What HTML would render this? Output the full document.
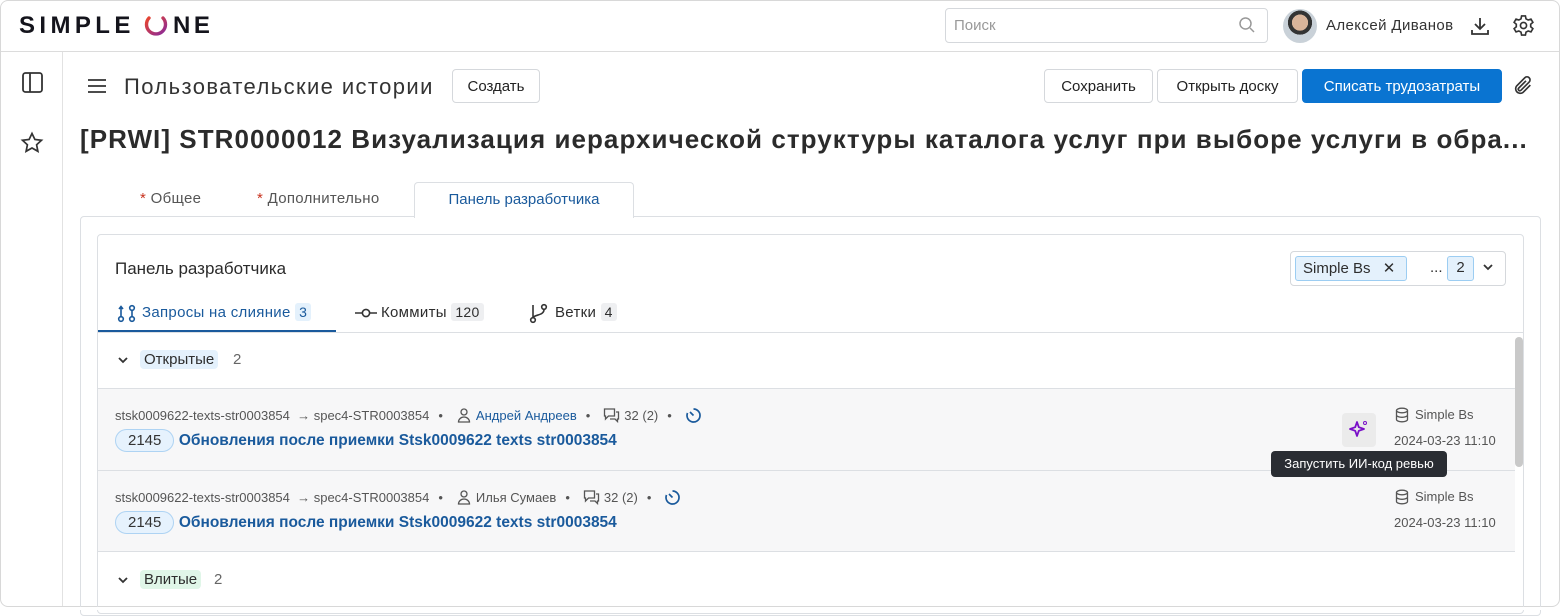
<!DOCTYPE html>
<html><head><meta charset="utf-8"><style>
*{box-sizing:border-box;margin:0;padding:0}
body{width:1560px;height:610px;overflow:hidden;background:#fff;font-family:"Liberation Sans","DejaVu Sans",sans-serif;color:#2e2e2e;position:relative}
.a{position:absolute;white-space:nowrap}
.btn{position:absolute;height:34px;border:1px solid #d5d8dc;border-radius:4px;background:#fff;font-size:15px;display:flex;align-items:center;justify-content:center;color:#222}
.meta{font-size:13px;color:#555;display:flex;align-items:center;gap:0}
.meta svg{margin:0 4px}
.dot{margin:0 9px}
.link{color:#1a5a9c}
.pill{display:inline-block;border:1px solid #aed3f3;background:#e6f2fd;border-radius:13px;padding:2px 12px;font-size:15px;color:#333}
.cnt{background:#eeeff1;border-radius:3px;padding:1px 4px;font-size:14px}
</style></head><body>
<div class="a" style="left:0;top:0;width:1560px;height:607px;border:1px solid #d8d8d8;border-radius:8px;overflow:hidden"></div>
<div class="a" style="left:1px;top:51px;width:1558px;height:1px;background:#dcdcdc"></div>
<div class="a" style="left:62px;top:52px;width:1px;height:554px;background:#e2e2e2"></div>
<!-- logo -->
<div class="a" style="left:19px;top:12px;font-size:24px;font-weight:bold;letter-spacing:4.4px;color:#14141c">SIMPLE</div>
<svg class="a" style="left:144px;top:13px" width="24" height="24" viewBox="0 0 24 24" fill="none"><defs><linearGradient id="g" x1="0" y1="0" x2="1" y2="1"><stop offset="0" stop-color="#e8452e"/><stop offset="1" stop-color="#8a2a9a"/></linearGradient></defs><path d="M5 5A9.5 9.5 0 1 0 19 5" stroke="url(#g)" stroke-width="3.4" stroke-linecap="round"/></svg>
<div class="a" style="left:173px;top:12px;font-size:24px;font-weight:bold;letter-spacing:3.5px;color:#14141c">NE</div>
<!-- search -->
<div class="a" style="left:945px;top:8px;width:323px;height:35px;border:1px solid #d5d8dc;border-radius:4px;font-size:15px;color:#999;padding:8px 8px">Поиск</div>
<svg class="a" style="left:1238px;top:16px" width="18" height="18" viewBox="0 0 18 18" fill="none" stroke="#999" stroke-width="1.5"><circle cx="7.5" cy="7.5" r="5.5"/><path d="M12 12l4 4"/></svg>
<div class="a" style="left:1283px;top:9px;width:34px;height:34px;border-radius:50%;background:radial-gradient(circle at 50% 40%,#d9b49a 0 30%,#333 31% 45%,#c9d1d8 46%)"></div>
<div class="a" style="left:1326px;top:17px;font-size:15px;color:#333;letter-spacing:.4px">Алексей Диванов</div>
<svg class="a" style="left:1469px;top:15px" width="22" height="22" viewBox="0 0 22 22" fill="none" stroke="#333" stroke-width="1.8"><path d="M11 3v11M6 9l5 5 5-5M3 15v4h16v-4"/></svg>
<svg class="a" style="left:1512px;top:14px" width="23" height="23" viewBox="0 0 24 24" fill="none" stroke="#333" stroke-width="1.7"><circle cx="12" cy="12" r="3.2"/><path d="M10 2h4l.6 3 2.3 1.3 2.9-1 2 3.4-2.3 2v2.6l2.3 2-2 3.4-2.9-1-2.3 1.3-.6 3h-4l-.6-3-2.3-1.3-2.9 1-2-3.4 2.3-2v-2.6l-2.3-2 2-3.4 2.9 1L9.4 5z"/></svg>
<!-- sidebar icons -->
<svg class="a" style="left:21px;top:71px" width="23" height="23" viewBox="0 0 23 23" fill="none" stroke="#333" stroke-width="1.8"><rect x="2" y="2" width="19" height="19" rx="2.5"/><path d="M9 2v19"/></svg>
<svg class="a" style="left:20px;top:131px" width="24" height="24" viewBox="0 0 24 24" fill="none" stroke="#333" stroke-width="1.7"><path d="M12 2.5l2.9 6 6.6.8-4.9 4.5 1.3 6.5L12 17l-5.9 3.3 1.3-6.5-4.9-4.5 6.6-.8z"/></svg>
<!-- toolbar -->
<svg class="a" style="left:87px;top:78px" width="20" height="16" viewBox="0 0 20 16" stroke="#333" stroke-width="1.8"><path d="M1 2h18M1 8h18M1 14h18"/></svg>
<div class="a" style="left:124px;top:74px;font-size:22px;color:#333;letter-spacing:1.4px">Пользовательские истории</div>
<div class="btn" style="left:452px;top:69px;width:88px">Создать</div>
<div class="btn" style="left:1044px;top:69px;width:109px">Сохранить</div>
<div class="btn" style="left:1157px;top:69px;width:141px">Открыть доску</div>
<div class="btn" style="left:1302px;top:69px;width:200px;background:#0a74d1;border-color:#0a74d1;color:#fff">Списать трудозатраты</div>
<svg class="a" style="left:1512px;top:75px" width="22" height="22" viewBox="0 0 24 24" fill="none" stroke="#333" stroke-width="1.8"><path d="M20 11l-8 8a5 5 0 01-7-7l9-9a3.3 3.3 0 014.7 4.7l-9 9a1.7 1.7 0 01-2.4-2.4l8-8"/></svg>
<div class="a" style="left:80px;top:124px;font-size:26px;font-weight:bold;color:#2b2b2b;letter-spacing:1.05px">[PRWI] STR0000012 Визуализация иерархической структуры каталога услуг при выборе услуги в обра...</div>
<!-- tabs -->
<div class="a" style="left:140px;top:190px;font-size:15px;color:#555;letter-spacing:.3px"><span style="color:#c8321e">*</span> Общее</div>
<div class="a" style="left:257px;top:190px;font-size:15px;color:#555;letter-spacing:.3px"><span style="color:#c8321e">*</span> Дополнительно</div>
<div class="a" style="left:80px;top:216px;width:1461px;height:400px;border:1px solid #dcdfe3;border-radius:4px"></div>
<div class="a" style="left:414px;top:182px;width:220px;height:36px;border:1px solid #dcdfe3;border-bottom:none;border-radius:4px 4px 0 0;background:#fff;font-size:15px;color:#1a5a9c;text-align:center;padding-top:8px">Панель разработчика</div>
<!-- card -->
<div class="a" style="left:97px;top:234px;width:1427px;height:380px;border:1px solid #dcdfe3;border-radius:4px"></div>
<div class="a" style="left:115px;top:259px;font-size:17px;color:#2b2b2b">Панель разработчика</div>
<div class="a" style="left:1290px;top:251px;width:216px;height:35px;border:1px solid #d5d8dc;border-radius:4px"></div>
<div class="a" style="left:1295px;top:256px;width:112px;height:25px;border:1px solid #9ccdf2;background:#e4f1fc;border-radius:3px;font-size:15px;padding:2px 7px">Simple Bs <span style="margin-left:8px">✕</span></div>
<div class="a" style="left:1430px;top:259px;font-size:15px">...</div>
<div class="a" style="left:1447px;top:256px;width:27px;height:25px;border:1px solid #9ccdf2;background:#e4f1fc;border-radius:3px;font-size:15px;text-align:center;padding-top:2px">2</div>
<svg class="a" style="left:1482px;top:262px" width="12" height="10" viewBox="0 0 12 10" fill="none" stroke="#333" stroke-width="1.8"><path d="M2 3l4 4 4-4"/></svg>
<!-- subtabs -->
<svg class="a" style="left:117px;top:303px" width="20" height="20" viewBox="0 0 20 20" fill="none" stroke="#1a5a9c" stroke-width="1.6"><circle cx="4" cy="16" r="2.3"/><circle cx="15" cy="16" r="2.3"/><circle cx="15" cy="5" r="2.3"/><path d="M4 13.5V4M2 6l2-2.5L6 6M15 7.5v6"/></svg>
<div class="a" style="left:142px;top:304px;font-size:15px;color:#1a5a9c;letter-spacing:.3px">Запросы на слияние <span class="cnt" style="background:#e4f1fc">3</span></div>
<div class="a" style="left:98px;top:330px;width:238px;height:2px;background:#1a5a9c"></div>
<svg class="a" style="left:355px;top:307px" width="22" height="12" viewBox="0 0 22 12" fill="none" stroke="#333" stroke-width="1.6"><path d="M0 6h7M15 6h7"/><circle cx="11" cy="6" r="3.6"/></svg>
<div class="a" style="left:381px;top:304px;font-size:15px;letter-spacing:.3px">Коммиты <span class="cnt">120</span></div>
<svg class="a" style="left:529px;top:302px" width="20" height="22" viewBox="0 0 20 22" fill="none" stroke="#333" stroke-width="1.6"><circle cx="4" cy="18" r="2.3"/><circle cx="15" cy="5" r="2.3"/><path d="M4 15.5V3M15 7.5c0 6-9 5-11 8"/></svg>
<div class="a" style="left:555px;top:304px;font-size:15px;letter-spacing:.3px">Ветки <span class="cnt">4</span></div>
<div class="a" style="left:98px;top:332px;width:1425px;height:1px;background:#dcdfe3"></div>
<!-- groups -->
<svg class="a" style="left:117px;top:355px" width="12" height="10" viewBox="0 0 12 10" fill="none" stroke="#333" stroke-width="1.8"><path d="M2 3l4 4 4-4"/></svg>
<div class="a" style="left:140px;top:350px;font-size:15px;background:#e4f1fc;border-radius:4px;padding:1px 4px">Открытые</div>
<div class="a" style="left:233px;top:351px;font-size:15px;color:#666">2</div>
<div class="a" style="left:98px;top:388px;width:1417px;height:164px;background:#f7f7f8;border-top:1px solid #dcdfe3;border-bottom:1px solid #dcdfe3"></div>
<div class="a" style="left:98px;top:470px;width:1417px;height:1px;background:#dcdfe3"></div>
<div class="a" style="left:1515px;top:337px;width:8px;height:130px;background:#c9c9c9;border-radius:4px"></div>
<!-- rows -->
<div class="a meta" style="left:115px;top:406px;height:18px">stsk0009622-texts-str0003854 &nbsp;→ spec4-STR0003854<span class="dot">•</span><svg width="16" height="16" viewBox="0 0 16 16" fill="none" stroke="#555" stroke-width="1.3"><circle cx="8" cy="5" r="3"/><path d="M2.5 15a5.5 5 0 0111 0z"/></svg><span class="link">Андрей Андреев</span><span class="dot">•</span><svg width="17" height="16" viewBox="0 0 17 16" fill="none" stroke="#555" stroke-width="1.3"><path d="M1.5 2h10v7h-6l-3 3V9h-1z"/><path d="M13 5h2.5v7h-1v2.5L12 12H7"/></svg>32 (2)<span class="dot">•</span><svg width="17" height="17" viewBox="0 0 17 17" fill="none" stroke="#1a5a9c" stroke-width="1.7"><path d="M8.5 2a6.5 6.5 0 1 1-6 4"/><path d="M5 5l3.5 3.5"/></svg></div>
<div class="a" style="left:115px;top:429px"><span class="pill">2145</span> <span class="link" style="font-size:15.5px;font-weight:bold">Обновления после приемки Stsk0009622 texts str0003854</span></div>
<div class="a meta" style="left:115px;top:488px;height:18px">stsk0009622-texts-str0003854 &nbsp;→ spec4-STR0003854<span class="dot">•</span><svg width="16" height="16" viewBox="0 0 16 16" fill="none" stroke="#555" stroke-width="1.3"><circle cx="8" cy="5" r="3"/><path d="M2.5 15a5.5 5 0 0111 0z"/></svg>Илья Сумаев<span class="dot">•</span><svg width="17" height="16" viewBox="0 0 17 16" fill="none" stroke="#555" stroke-width="1.3"><path d="M1.5 2h10v7h-6l-3 3V9h-1z"/><path d="M13 5h2.5v7h-1v2.5L12 12H7"/></svg>32 (2)<span class="dot">•</span><svg width="17" height="17" viewBox="0 0 17 17" fill="none" stroke="#1a5a9c" stroke-width="1.7"><path d="M8.5 2a6.5 6.5 0 1 1-6 4"/><path d="M5 5l3.5 3.5"/></svg></div>
<div class="a" style="left:115px;top:511px"><span class="pill">2145</span> <span class="link" style="font-size:15.5px;font-weight:bold">Обновления после приемки Stsk0009622 texts str0003854</span></div>
<div class="a" style="left:1342px;top:413px;width:34px;height:34px;background:#ebebeb;border-radius:4px"></div>
<svg class="a" style="left:1348px;top:419px" width="22" height="22" viewBox="0 0 22 22"><path d="M9 3l1.8 5.2L16 10l-5.2 1.8L9 17l-1.8-5.2L2 10l5.2-1.8z" fill="none" stroke="#7a10c8" stroke-width="1.8" stroke-linejoin="round"/><circle cx="17" cy="4" r="1.5" fill="none" stroke="#7a10c8" stroke-width="1"/></svg>
<div class="a" style="left:1271px;top:451px;width:176px;height:26px;background:#2a2d33;border-radius:4px;color:#fff;font-size:13px;text-align:center;padding-top:5px">Запустить ИИ-код ревью</div>
<svg class="a" style="left:1395px;top:407px" width="14" height="16" viewBox="0 0 14 16" fill="none" stroke="#555" stroke-width="1.3"><ellipse cx="7" cy="3.5" rx="5.5" ry="2.3"/><path d="M1.5 3.5v9c0 1.3 2.5 2.3 5.5 2.3s5.5-1 5.5-2.3v-9M1.5 8c0 1.3 2.5 2.3 5.5 2.3S12.5 9.3 12.5 8"/></svg>
<div class="a meta" style="left:1415px;top:407px">Simple Bs</div>
<div class="a meta" style="left:1394px;top:433px">2024-03-23 11:10</div>
<svg class="a" style="left:1395px;top:489px" width="14" height="16" viewBox="0 0 14 16" fill="none" stroke="#555" stroke-width="1.3"><ellipse cx="7" cy="3.5" rx="5.5" ry="2.3"/><path d="M1.5 3.5v9c0 1.3 2.5 2.3 5.5 2.3s5.5-1 5.5-2.3v-9M1.5 8c0 1.3 2.5 2.3 5.5 2.3S12.5 9.3 12.5 8"/></svg>
<div class="a meta" style="left:1415px;top:489px">Simple Bs</div>
<div class="a meta" style="left:1394px;top:515px">2024-03-23 11:10</div>
<svg class="a" style="left:117px;top:575px" width="12" height="10" viewBox="0 0 12 10" fill="none" stroke="#333" stroke-width="1.8"><path d="M2 3l4 4 4-4"/></svg>
<div class="a" style="left:140px;top:570px;font-size:15px;background:#e0f6e8;border-radius:4px;padding:1px 4px">Влитые</div>
<div class="a" style="left:214px;top:571px;font-size:15px;color:#666">2</div>
<div class="a" style="left:0;top:607px;width:1560px;height:3px;background:#fff"></div>
</body></html>
